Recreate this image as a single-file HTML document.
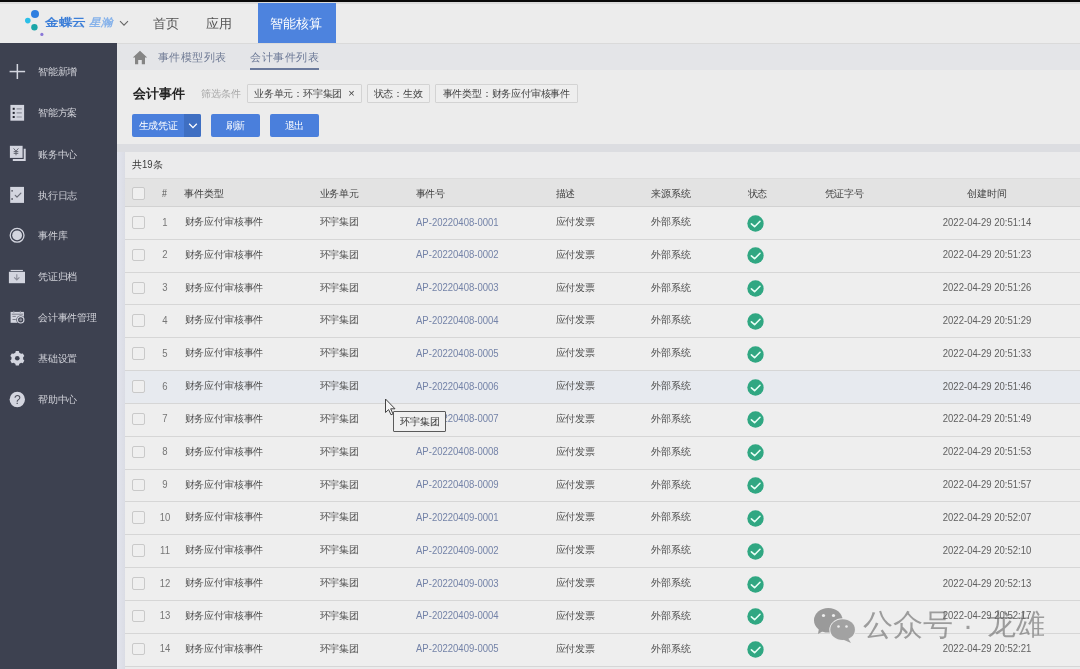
<!DOCTYPE html>
<html><head><meta charset="utf-8">
<style>
*{margin:0;padding:0;box-sizing:border-box}
html,body{width:1080px;height:669px;overflow:hidden;background:#ececec;-webkit-font-smoothing:antialiased;font-family:"Liberation Sans",sans-serif;color:#333}
.abs{position:absolute}
#topbar{left:0;top:0;width:1080px;height:2px;background:#0a0a0a}
#topline{left:0;top:2px;width:1080px;height:2px;background:#dcdcdc}
#header{left:0;top:4px;width:1080px;height:39px;background:#ececec}
#sidebar{left:0;top:43px;width:117px;height:626px;background:#3d4150}
#strip{left:117px;top:151.8px;width:8.5px;height:520px;background:linear-gradient(90deg,#e3e5ee,#d9dbe3)}
#crumb{left:117px;top:43px;width:963px;height:27.5px;background:#e4e5e8;border-bottom:1px solid #d8d8da;border-top:1px solid #dadada}
#titlearea{left:117px;top:70px;width:963px;height:73px;background:#ececec}
#gap{left:117px;top:143.8px;width:963px;height:8px;background:#dcdde1}
#card{left:125px;top:151.5px;width:955px;height:518px;background:#ebebec}
.t{position:absolute;white-space:nowrap;line-height:1}
.nav{font-size:13px;color:#555;top:16.5px}
#active{left:257.5px;top:3px;width:78px;height:40px;background:#4d83de}
#active span{position:absolute;left:12.5px;top:11.6px;font-size:13.3px;color:#fff}
.side{font-size:9.8px;letter-spacing:-0.2px;color:#d0d1d8;left:38px}
.crumbt{font-size:11.4px;letter-spacing:0.45px;color:#6f7a94;top:51.5px}
.tag{position:absolute;top:84.3px;height:19px;border:1px solid #d3d3d3;background:#eeeeee;border-radius:1px}
.tag span{position:absolute;top:4px;font-size:9.8px;letter-spacing:-0.2px;color:#444;white-space:nowrap;line-height:1}
.btn{position:absolute;top:114.3px;height:22.4px;background:#4a7fdc;border-radius:2px}
.btn span{position:absolute;top:6.6px;font-size:9.8px;letter-spacing:-0.15px;color:#fff;white-space:nowrap;line-height:1}
.row{position:absolute;left:125px;width:955px;height:32.83px;border-bottom:1px solid #d6d6d6;background:#eeeeee}
.row.hov{background:#e7eaef}
.row .t{top:10px;font-size:9.8px;letter-spacing:-0.16px;color:#505050;margin-left:-125px}
.row .num{letter-spacing:0!important;font-size:11px;transform:translateX(-50%) scaleX(0.866);top:9.5px!important;color:#767676!important}
.row .link{color:#7483a8;font-size:11px;letter-spacing:0!important;transform:scaleX(0.866);transform-origin:0 0;top:9.5px!important}
.row .time{letter-spacing:0!important;left:986.5px;transform:translateX(-50%) scaleX(0.866);font-size:11px;color:#606060;top:9.5px!important}
.cb{position:absolute;left:7.2px;width:12.5px;height:12.5px;border:1px solid #c9c9c9;border-radius:2px;background:#efefef}
.ok{position:absolute;left:622px;top:7.5px;width:17px;height:17px}
#thead{left:125px;top:178px;width:955px;height:29px;background:#e3e3e3;border-bottom:1px solid #d2d2d2;border-top:1px solid #dcdcdc}
#thead .t{top:9.7px;letter-spacing:-0.12px;font-size:9.8px;color:#444}
</style></head><body><div id="root" style="position:absolute;left:0;top:0;width:1080px;height:669px;will-change:transform">
<div class="abs" id="topbar"></div>
<div class="abs" id="topline"></div>
<div class="abs" id="header"></div>

<!-- logo -->
<svg class="abs" style="left:20px;top:5px" width="24" height="36" viewBox="20 5 24 36">
<circle cx="35" cy="13.9" r="4" fill="#2f7fe0"/>
<circle cx="27.8" cy="20.6" r="2.8" fill="#2bbfe8"/>
<circle cx="34.4" cy="27.2" r="3.2" fill="#1aa5a8"/>
<circle cx="41.9" cy="34.4" r="1.6" fill="#8a78d8"/>
</svg>
<span class="t" style="left:45.3px;top:16.6px;font-size:13.4px;font-weight:bold;color:#3d7fd8;transform:scale(1.05,0.84);transform-origin:0 0">金蝶云</span>
<span class="t" style="left:88.5px;top:16.6px;font-size:12.5px;font-style:italic;font-weight:bold;color:#86b2ea;transform:scale(0.93,0.86);transform-origin:0 0">星瀚</span>
<svg class="abs" style="left:119px;top:20px" width="10" height="7" viewBox="0 0 10 7"><path d="M1 1.2 L5 5.2 L9 1.2" fill="none" stroke="#666" stroke-width="1.1"/></svg>
<span class="t nav" style="left:153px">首页</span>
<span class="t nav" style="left:205.5px">应用</span>
<div class="abs" id="active"><span>智能核算</span></div>

<div class="abs" id="sidebar"></div>
<div class="abs" id="strip"></div>

<!-- sidebar icons -->
<svg class="abs" style="left:0;top:43px" width="117" height="400" viewBox="0 43 117 400">
<g fill="#d3d5df" stroke="none">
 <rect x="9.6" y="70.8" width="15.5" height="1.5"/>
 <rect x="16.6" y="64" width="1.5" height="15"/>
 <rect x="10.4" y="104.9" width="13.7" height="15.8"/>
 <path d="M12.8 148.8 H25.7 V160.9 H12.8 V158.9 H23.7 V148.8 Z"/>
 <rect x="9.9" y="145.8" width="12.7" height="12.1"/>
 <rect x="10.2" y="186.9" width="13.8" height="16"/>
 <circle cx="17.1" cy="235.3" r="6.9" fill="none" stroke="#d3d5df" stroke-width="1.3"/>
 <circle cx="17.1" cy="235.3" r="4.9"/>
 <rect x="10.6" y="269.9" width="12.3" height="1.2"/>
 <rect x="8.9" y="271.8" width="16.1" height="11.4"/>
 <rect x="10.6" y="311.9" width="13.3" height="10.9"/>
 <path d="M19.30 352.75 L18.80 351.05 L15.80 351.05 L15.30 352.75 L13.49 353.79 L11.77 353.38 L10.27 355.98 L11.49 357.26 L11.49 359.34 L10.27 360.62 L11.77 363.22 L13.49 362.81 L15.30 363.85 L15.80 365.55 L18.80 365.55 L19.30 363.85 L21.11 362.81 L22.83 363.22 L24.33 360.62 L23.11 359.34 L23.11 357.26 L24.33 355.98 L22.83 353.38 L21.11 353.79 Z"/>
 <circle cx="17.3" cy="399.5" r="7.7"/>
</g>
<g fill="#23252f">
 <rect x="12.7" y="107.8" width="2" height="2"/>
 <rect x="12.7" y="111.9" width="2" height="2"/>
 <rect x="12.7" y="116" width="2" height="2"/>
</g>
<circle cx="17.3" cy="358.3" r="2.3" fill="#3d4150"/>
<g fill="none" stroke="#8e909c" stroke-width="1.2">
 <path d="M16.6 108.8 H21.8 M16.6 112.9 H21.8 M16.6 117 H21.8"/>
</g>
<g fill="none" stroke="#5a5c68" stroke-width="0.9">
 <path d="M13.6 148.4 L16 151.2 L18.4 148.4 M16 151.2 V155.3 M13.7 151.6 H18.3 M13.7 153.4 H18.3"/>
</g>
<g fill="none" stroke="#6a6c78" stroke-width="1.2" stroke-linecap="round" stroke-linejoin="round">
 <path d="M15.3 195.3 L17 197.1 L20.9 193.2"/>
</g>
<circle cx="12.1" cy="190.8" r="0.9" fill="#5a5c68"/><circle cx="12.1" cy="199" r="0.9" fill="#5a5c68"/>
<g fill="none" stroke="#8a8c98" stroke-width="1.1">
 <path d="M16.8 274.3 V280 M14.2 277.4 L16.8 280 L19.4 277.4"/>
</g>
<g fill="none" stroke="#7d7f8b" stroke-width="1">
 <path d="M11.8 314.2 H23 M12.5 316.4 H15.8 M12.5 319.5 H15.8"/>
</g>
<rect x="13.3" y="310.8" width="1" height="2" fill="#8a8c98"/><rect x="19.8" y="310.8" width="1" height="2" fill="#8a8c98"/>
<circle cx="20.7" cy="319.8" r="4.4" fill="#3d4150"/>
<circle cx="20.7" cy="319.8" r="3.2" fill="none" stroke="#d3d5df" stroke-width="1.2"/>
<circle cx="20.7" cy="319.8" r="1.5" fill="#8a8c98"/>
<text x="17.5" y="403.7" font-size="12.2" text-anchor="middle" fill="#4a4c58" font-family="Liberation Sans">?</text>
</svg>

<span class="t side" style="top:67px">智能新增</span>
<span class="t side" style="top:108px">智能方案</span>
<span class="t side" style="top:149.5px">账务中心</span>
<span class="t side" style="top:190.5px">执行日志</span>
<span class="t side" style="top:231px">事件库</span>
<span class="t side" style="top:272px">凭证归档</span>
<span class="t side" style="top:313px">会计事件管理</span>
<span class="t side" style="top:354px">基础设置</span>
<span class="t side" style="top:395px">帮助中心</span>

<div class="abs" id="crumb"></div>
<svg class="abs" style="left:132px;top:50px" width="16" height="15" viewBox="0 0 16 15"><path d="M8 0.8 L15.2 7.6 L13 7.6 L13 14.2 L9.8 14.2 L9.8 10 L6.2 10 L6.2 14.2 L3 14.2 L3 7.6 L0.8 7.6 Z" fill="#858585"/></svg>
<span class="t crumbt" style="left:158px">事件模型列表</span>
<span class="t crumbt" style="left:250.4px;color:#6b7896">会计事件列表</span>
<div class="abs" style="left:250.4px;top:67.8px;width:68.5px;height:2px;background:#6b7a9c"></div>

<div class="abs" id="titlearea"></div>
<span class="t" style="left:132.5px;top:87px;font-size:13px;font-weight:bold;color:#222">会计事件</span>
<span class="t" style="left:200.5px;top:88.5px;font-size:10px;color:#a8a8a8">筛选条件</span>
<div class="tag" style="left:247.2px;width:115.3px"><span style="left:5.8px">业务单元：环宇集团</span><span style="left:100px;font-size:11px;top:3px">×</span></div>
<div class="tag" style="left:366.6px;width:63.6px"><span style="left:6px">状态：生效</span></div>
<div class="tag" style="left:435.4px;width:142.4px"><span style="left:6.2px">事件类型：财务应付审核事件</span></div>

<div class="btn" style="left:132.2px;width:68.8px"><span style="left:6.4px">生成凭证</span><div style="position:absolute;left:52px;top:0;width:16.8px;height:22.4px;background:#3f6fc2;border-radius:0 2px 2px 0"></div>
<svg style="position:absolute;left:55.5px;top:8.5px" width="10" height="6" viewBox="0 0 10 6"><path d="M1.2 0.8 L5 4.6 L8.8 0.8" fill="none" stroke="#fff" stroke-width="1.3"/></svg></div>
<div class="btn" style="left:211px;width:48.6px"><span style="left:14.5px">刷新</span></div>
<div class="btn" style="left:270px;width:49px"><span style="left:14.5px">退出</span></div>

<div class="abs" id="gap"></div>
<div class="abs" id="card"></div>
<span class="t" style="left:131.7px;top:159.4px;font-size:9.8px;color:#3a3a3a">共<span style="display:inline-block;font-size:11px;transform:scaleX(0.866);transform-origin:0 0;width:11.2px;vertical-align:-0.5px">19</span>条</span>

<div class="abs" id="thead">
<div class="cb" style="top:8px"></div>
<span class="t" style="left:36.5px;top:9px;font-size:11px;transform:scaleX(0.8);transform-origin:0 0;color:#555">#</span>
<span class="t" style="left:59px">事件类型</span>
<span class="t" style="left:194.6px">业务单元</span>
<span class="t" style="left:290.5px">事件号</span>
<span class="t" style="left:430.6px">描述</span>
<span class="t" style="left:526.2px">来源系统</span>
<span class="t" style="left:622.5px">状态</span>
<span class="t" style="left:699.6px">凭证字号</span>
<span class="t" style="left:842px">创建时间</span>
</div>

<div class="row" style="top:207.00px">
<div class="cb" style="top:9px"></div>
<span class="t num" style="left:165px">1</span>
<span class="t" style="left:184.5px">财务应付审核事件</span>
<span class="t" style="left:319.6px">环宇集团</span>
<span class="t link" style="left:415.5px">AP-20220408-0001</span>
<span class="t" style="left:555.6px">应付发票</span>
<span class="t" style="left:651.2px">外部系统</span>
<div class="ok"><svg width="17" height="17" viewBox="0 0 17 17"><circle cx="8.5" cy="8.5" r="8.15" fill="#30a782"/><path d="M4.4 8.9 L7.6 11.7 L13 6.3" fill="none" stroke="#e8fff6" stroke-width="1.6" stroke-linecap="round" stroke-linejoin="round"/></svg></div>
<span class="t time">2022-04-29 20:51:14</span>
</div>
<div class="row" style="top:239.83px">
<div class="cb" style="top:9px"></div>
<span class="t num" style="left:165px">2</span>
<span class="t" style="left:184.5px">财务应付审核事件</span>
<span class="t" style="left:319.6px">环宇集团</span>
<span class="t link" style="left:415.5px">AP-20220408-0002</span>
<span class="t" style="left:555.6px">应付发票</span>
<span class="t" style="left:651.2px">外部系统</span>
<div class="ok"><svg width="17" height="17" viewBox="0 0 17 17"><circle cx="8.5" cy="8.5" r="8.15" fill="#30a782"/><path d="M4.4 8.9 L7.6 11.7 L13 6.3" fill="none" stroke="#e8fff6" stroke-width="1.6" stroke-linecap="round" stroke-linejoin="round"/></svg></div>
<span class="t time">2022-04-29 20:51:23</span>
</div>
<div class="row" style="top:272.66px">
<div class="cb" style="top:9px"></div>
<span class="t num" style="left:165px">3</span>
<span class="t" style="left:184.5px">财务应付审核事件</span>
<span class="t" style="left:319.6px">环宇集团</span>
<span class="t link" style="left:415.5px">AP-20220408-0003</span>
<span class="t" style="left:555.6px">应付发票</span>
<span class="t" style="left:651.2px">外部系统</span>
<div class="ok"><svg width="17" height="17" viewBox="0 0 17 17"><circle cx="8.5" cy="8.5" r="8.15" fill="#30a782"/><path d="M4.4 8.9 L7.6 11.7 L13 6.3" fill="none" stroke="#e8fff6" stroke-width="1.6" stroke-linecap="round" stroke-linejoin="round"/></svg></div>
<span class="t time">2022-04-29 20:51:26</span>
</div>
<div class="row" style="top:305.49px">
<div class="cb" style="top:9px"></div>
<span class="t num" style="left:165px">4</span>
<span class="t" style="left:184.5px">财务应付审核事件</span>
<span class="t" style="left:319.6px">环宇集团</span>
<span class="t link" style="left:415.5px">AP-20220408-0004</span>
<span class="t" style="left:555.6px">应付发票</span>
<span class="t" style="left:651.2px">外部系统</span>
<div class="ok"><svg width="17" height="17" viewBox="0 0 17 17"><circle cx="8.5" cy="8.5" r="8.15" fill="#30a782"/><path d="M4.4 8.9 L7.6 11.7 L13 6.3" fill="none" stroke="#e8fff6" stroke-width="1.6" stroke-linecap="round" stroke-linejoin="round"/></svg></div>
<span class="t time">2022-04-29 20:51:29</span>
</div>
<div class="row" style="top:338.32px">
<div class="cb" style="top:9px"></div>
<span class="t num" style="left:165px">5</span>
<span class="t" style="left:184.5px">财务应付审核事件</span>
<span class="t" style="left:319.6px">环宇集团</span>
<span class="t link" style="left:415.5px">AP-20220408-0005</span>
<span class="t" style="left:555.6px">应付发票</span>
<span class="t" style="left:651.2px">外部系统</span>
<div class="ok"><svg width="17" height="17" viewBox="0 0 17 17"><circle cx="8.5" cy="8.5" r="8.15" fill="#30a782"/><path d="M4.4 8.9 L7.6 11.7 L13 6.3" fill="none" stroke="#e8fff6" stroke-width="1.6" stroke-linecap="round" stroke-linejoin="round"/></svg></div>
<span class="t time">2022-04-29 20:51:33</span>
</div>
<div class="row hov" style="top:371.15px">
<div class="cb" style="top:9px"></div>
<span class="t num" style="left:165px">6</span>
<span class="t" style="left:184.5px">财务应付审核事件</span>
<span class="t" style="left:319.6px">环宇集团</span>
<span class="t link" style="left:415.5px">AP-20220408-0006</span>
<span class="t" style="left:555.6px">应付发票</span>
<span class="t" style="left:651.2px">外部系统</span>
<div class="ok"><svg width="17" height="17" viewBox="0 0 17 17"><circle cx="8.5" cy="8.5" r="8.15" fill="#30a782"/><path d="M4.4 8.9 L7.6 11.7 L13 6.3" fill="none" stroke="#e8fff6" stroke-width="1.6" stroke-linecap="round" stroke-linejoin="round"/></svg></div>
<span class="t time">2022-04-29 20:51:46</span>
</div>
<div class="row" style="top:403.98px">
<div class="cb" style="top:9px"></div>
<span class="t num" style="left:165px">7</span>
<span class="t" style="left:184.5px">财务应付审核事件</span>
<span class="t" style="left:319.6px">环宇集团</span>
<span class="t link" style="left:415.5px">AP-20220408-0007</span>
<span class="t" style="left:555.6px">应付发票</span>
<span class="t" style="left:651.2px">外部系统</span>
<div class="ok"><svg width="17" height="17" viewBox="0 0 17 17"><circle cx="8.5" cy="8.5" r="8.15" fill="#30a782"/><path d="M4.4 8.9 L7.6 11.7 L13 6.3" fill="none" stroke="#e8fff6" stroke-width="1.6" stroke-linecap="round" stroke-linejoin="round"/></svg></div>
<span class="t time">2022-04-29 20:51:49</span>
</div>
<div class="row" style="top:436.81px">
<div class="cb" style="top:9px"></div>
<span class="t num" style="left:165px">8</span>
<span class="t" style="left:184.5px">财务应付审核事件</span>
<span class="t" style="left:319.6px">环宇集团</span>
<span class="t link" style="left:415.5px">AP-20220408-0008</span>
<span class="t" style="left:555.6px">应付发票</span>
<span class="t" style="left:651.2px">外部系统</span>
<div class="ok"><svg width="17" height="17" viewBox="0 0 17 17"><circle cx="8.5" cy="8.5" r="8.15" fill="#30a782"/><path d="M4.4 8.9 L7.6 11.7 L13 6.3" fill="none" stroke="#e8fff6" stroke-width="1.6" stroke-linecap="round" stroke-linejoin="round"/></svg></div>
<span class="t time">2022-04-29 20:51:53</span>
</div>
<div class="row" style="top:469.64px">
<div class="cb" style="top:9px"></div>
<span class="t num" style="left:165px">9</span>
<span class="t" style="left:184.5px">财务应付审核事件</span>
<span class="t" style="left:319.6px">环宇集团</span>
<span class="t link" style="left:415.5px">AP-20220408-0009</span>
<span class="t" style="left:555.6px">应付发票</span>
<span class="t" style="left:651.2px">外部系统</span>
<div class="ok"><svg width="17" height="17" viewBox="0 0 17 17"><circle cx="8.5" cy="8.5" r="8.15" fill="#30a782"/><path d="M4.4 8.9 L7.6 11.7 L13 6.3" fill="none" stroke="#e8fff6" stroke-width="1.6" stroke-linecap="round" stroke-linejoin="round"/></svg></div>
<span class="t time">2022-04-29 20:51:57</span>
</div>
<div class="row" style="top:502.47px">
<div class="cb" style="top:9px"></div>
<span class="t num" style="left:165px">10</span>
<span class="t" style="left:184.5px">财务应付审核事件</span>
<span class="t" style="left:319.6px">环宇集团</span>
<span class="t link" style="left:415.5px">AP-20220409-0001</span>
<span class="t" style="left:555.6px">应付发票</span>
<span class="t" style="left:651.2px">外部系统</span>
<div class="ok"><svg width="17" height="17" viewBox="0 0 17 17"><circle cx="8.5" cy="8.5" r="8.15" fill="#30a782"/><path d="M4.4 8.9 L7.6 11.7 L13 6.3" fill="none" stroke="#e8fff6" stroke-width="1.6" stroke-linecap="round" stroke-linejoin="round"/></svg></div>
<span class="t time">2022-04-29 20:52:07</span>
</div>
<div class="row" style="top:535.30px">
<div class="cb" style="top:9px"></div>
<span class="t num" style="left:165px">11</span>
<span class="t" style="left:184.5px">财务应付审核事件</span>
<span class="t" style="left:319.6px">环宇集团</span>
<span class="t link" style="left:415.5px">AP-20220409-0002</span>
<span class="t" style="left:555.6px">应付发票</span>
<span class="t" style="left:651.2px">外部系统</span>
<div class="ok"><svg width="17" height="17" viewBox="0 0 17 17"><circle cx="8.5" cy="8.5" r="8.15" fill="#30a782"/><path d="M4.4 8.9 L7.6 11.7 L13 6.3" fill="none" stroke="#e8fff6" stroke-width="1.6" stroke-linecap="round" stroke-linejoin="round"/></svg></div>
<span class="t time">2022-04-29 20:52:10</span>
</div>
<div class="row" style="top:568.13px">
<div class="cb" style="top:9px"></div>
<span class="t num" style="left:165px">12</span>
<span class="t" style="left:184.5px">财务应付审核事件</span>
<span class="t" style="left:319.6px">环宇集团</span>
<span class="t link" style="left:415.5px">AP-20220409-0003</span>
<span class="t" style="left:555.6px">应付发票</span>
<span class="t" style="left:651.2px">外部系统</span>
<div class="ok"><svg width="17" height="17" viewBox="0 0 17 17"><circle cx="8.5" cy="8.5" r="8.15" fill="#30a782"/><path d="M4.4 8.9 L7.6 11.7 L13 6.3" fill="none" stroke="#e8fff6" stroke-width="1.6" stroke-linecap="round" stroke-linejoin="round"/></svg></div>
<span class="t time">2022-04-29 20:52:13</span>
</div>
<div class="row" style="top:600.96px">
<div class="cb" style="top:9px"></div>
<span class="t num" style="left:165px">13</span>
<span class="t" style="left:184.5px">财务应付审核事件</span>
<span class="t" style="left:319.6px">环宇集团</span>
<span class="t link" style="left:415.5px">AP-20220409-0004</span>
<span class="t" style="left:555.6px">应付发票</span>
<span class="t" style="left:651.2px">外部系统</span>
<div class="ok"><svg width="17" height="17" viewBox="0 0 17 17"><circle cx="8.5" cy="8.5" r="8.15" fill="#30a782"/><path d="M4.4 8.9 L7.6 11.7 L13 6.3" fill="none" stroke="#e8fff6" stroke-width="1.6" stroke-linecap="round" stroke-linejoin="round"/></svg></div>
<span class="t time">2022-04-29 20:52:17</span>
</div>
<div class="row" style="top:633.79px">
<div class="cb" style="top:9px"></div>
<span class="t num" style="left:165px">14</span>
<span class="t" style="left:184.5px">财务应付审核事件</span>
<span class="t" style="left:319.6px">环宇集团</span>
<span class="t link" style="left:415.5px">AP-20220409-0005</span>
<span class="t" style="left:555.6px">应付发票</span>
<span class="t" style="left:651.2px">外部系统</span>
<div class="ok"><svg width="17" height="17" viewBox="0 0 17 17"><circle cx="8.5" cy="8.5" r="8.15" fill="#30a782"/><path d="M4.4 8.9 L7.6 11.7 L13 6.3" fill="none" stroke="#e8fff6" stroke-width="1.6" stroke-linecap="round" stroke-linejoin="round"/></svg></div>
<span class="t time">2022-04-29 20:52:21</span>
</div>

<!-- tooltip -->
<div class="abs" style="left:393.3px;top:411.3px;width:52.6px;height:20.8px;border:1px solid #5a5a5a;background:#f0f0f0;border-radius:1px"></div>
<span class="t" style="left:400.4px;top:416.5px;font-size:9.7px;color:#333">环宇集团</span>
<!-- cursor -->
<svg class="abs" style="left:384px;top:398px" width="14" height="20" viewBox="0 0 14 20"><path d="M1.5 1 L1.5 14.5 L4.6 11.6 L7 16.8 L9 15.9 L6.7 10.8 L11 10.8 Z" fill="#f4f4f4" stroke="#444" stroke-width="1" stroke-linejoin="round"/></svg>

<!-- watermark -->
<svg class="abs" style="left:810px;top:603px" width="50" height="42" viewBox="810 603 50 42">
<g fill="#9a9a9a">
<ellipse cx="828.3" cy="620.3" rx="14.3" ry="12.3"/>
<path d="M819 628 L818 634 L825 630 Z"/>
</g>
<ellipse cx="842.6" cy="629.7" rx="13.3" ry="11.4" fill="#ececec"/>
<g fill="#a2a2a2">
<ellipse cx="842.6" cy="629.7" rx="12.3" ry="10.4"/>
<path d="M848 638 L851 643 L843 639.5 Z"/>
</g>
<g fill="#ececec">
<circle cx="823.5" cy="615.5" r="1.6"/><circle cx="833.5" cy="615.5" r="1.6"/>
<circle cx="838.5" cy="626.5" r="1.3"/><circle cx="846.5" cy="626.5" r="1.3"/>
</g>
</svg>
<span class="t" style="left:863px;top:610px;font-size:30px;color:rgba(105,105,105,0.62);letter-spacing:0px">公众号</span>
<span class="t" style="left:963px;top:610px;font-size:30px;color:rgba(105,105,105,0.62)">·</span>
<span class="t" style="left:987px;top:610px;font-size:29px;color:rgba(105,105,105,0.62)">龙雄</span>
</div></body></html>
